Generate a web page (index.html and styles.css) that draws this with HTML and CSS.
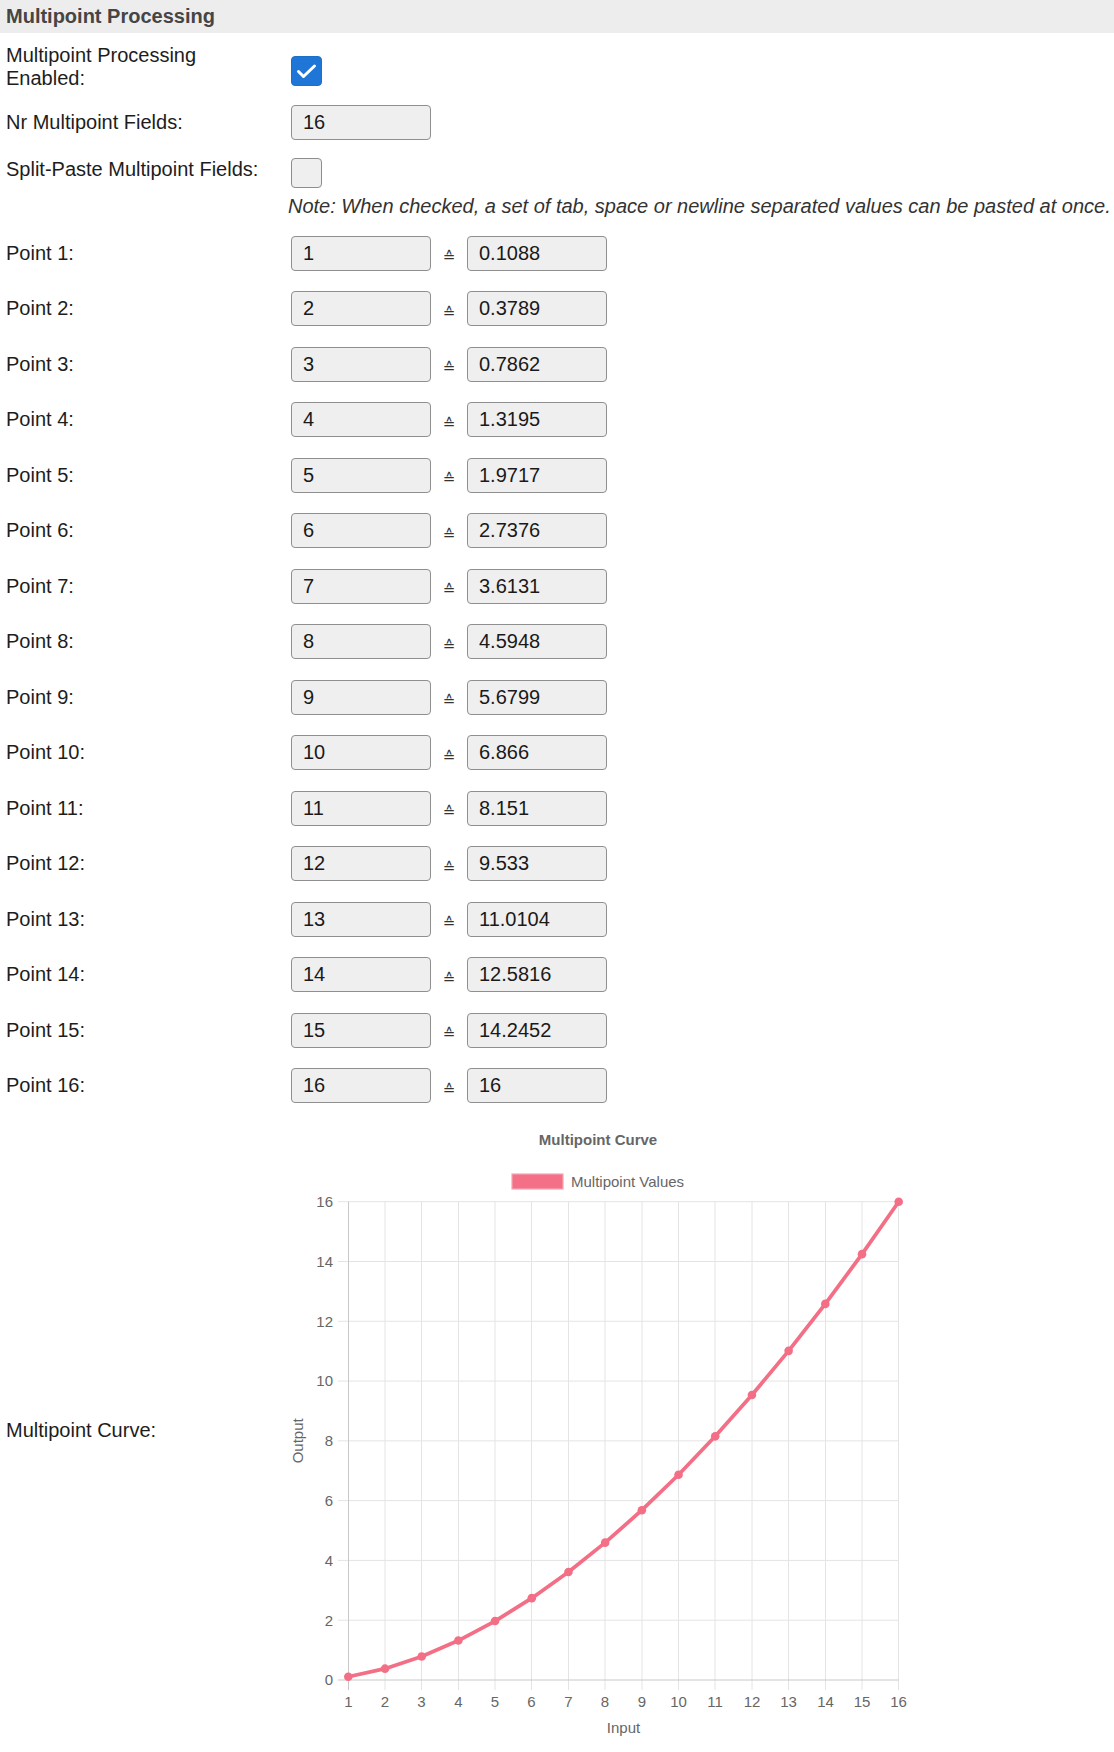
FILE: index.html
```html
<!DOCTYPE html>
<html>
<head>
<meta charset="utf-8">
<title>Multipoint Processing</title>
<link rel="stylesheet" href="styles.css">
</head>
<body>
<div class="section-title">Multipoint Processing</div>
<div class="form">
  <div class="row row-enabled">
    <div class="label">Multipoint Processing Enabled:</div>
    <div class="field"><span class="cb checked"><svg width="31" height="30" viewBox="0 0 31 30"><polyline points="7.5,15.5 12.5,20.5 23.5,10" fill="none" stroke="#fff" stroke-width="3" stroke-linecap="round" stroke-linejoin="round"/></svg></span></div>
  </div>
  <div class="row row-count">
    <div class="label">Nr Multipoint Fields:</div>
    <div class="field"><input class="txt" type="text" value="16"></div>
  </div>
  <div class="row row-split">
    <div class="label">Split-Paste Multipoint Fields:</div>
    <div class="field"><span class="cb"></span></div>
  </div>
  <div class="row row-note">
    <div></div>
    <div class="note">Note: When checked, a set of tab, space or newline separated values can be pasted at once.</div>
  </div>

  <div class="row point"><div class="label">Point 1:</div><div class="field pair"><input class="txt" type="text" value="1"><span class="eq">≙</span><input class="txt" type="text" value="0.1088"></div></div>
  <div class="row point"><div class="label">Point 2:</div><div class="field pair"><input class="txt" type="text" value="2"><span class="eq">≙</span><input class="txt" type="text" value="0.3789"></div></div>
  <div class="row point"><div class="label">Point 3:</div><div class="field pair"><input class="txt" type="text" value="3"><span class="eq">≙</span><input class="txt" type="text" value="0.7862"></div></div>
  <div class="row point"><div class="label">Point 4:</div><div class="field pair"><input class="txt" type="text" value="4"><span class="eq">≙</span><input class="txt" type="text" value="1.3195"></div></div>
  <div class="row point"><div class="label">Point 5:</div><div class="field pair"><input class="txt" type="text" value="5"><span class="eq">≙</span><input class="txt" type="text" value="1.9717"></div></div>
  <div class="row point"><div class="label">Point 6:</div><div class="field pair"><input class="txt" type="text" value="6"><span class="eq">≙</span><input class="txt" type="text" value="2.7376"></div></div>
  <div class="row point"><div class="label">Point 7:</div><div class="field pair"><input class="txt" type="text" value="7"><span class="eq">≙</span><input class="txt" type="text" value="3.6131"></div></div>
  <div class="row point"><div class="label">Point 8:</div><div class="field pair"><input class="txt" type="text" value="8"><span class="eq">≙</span><input class="txt" type="text" value="4.5948"></div></div>
  <div class="row point"><div class="label">Point 9:</div><div class="field pair"><input class="txt" type="text" value="9"><span class="eq">≙</span><input class="txt" type="text" value="5.6799"></div></div>
  <div class="row point"><div class="label">Point 10:</div><div class="field pair"><input class="txt" type="text" value="10"><span class="eq">≙</span><input class="txt" type="text" value="6.866"></div></div>
  <div class="row point"><div class="label">Point 11:</div><div class="field pair"><input class="txt" type="text" value="11"><span class="eq">≙</span><input class="txt" type="text" value="8.151"></div></div>
  <div class="row point"><div class="label">Point 12:</div><div class="field pair"><input class="txt" type="text" value="12"><span class="eq">≙</span><input class="txt" type="text" value="9.533"></div></div>
  <div class="row point"><div class="label">Point 13:</div><div class="field pair"><input class="txt" type="text" value="13"><span class="eq">≙</span><input class="txt" type="text" value="11.0104"></div></div>
  <div class="row point"><div class="label">Point 14:</div><div class="field pair"><input class="txt" type="text" value="14"><span class="eq">≙</span><input class="txt" type="text" value="12.5816"></div></div>
  <div class="row point"><div class="label">Point 15:</div><div class="field pair"><input class="txt" type="text" value="15"><span class="eq">≙</span><input class="txt" type="text" value="14.2452"></div></div>
  <div class="row point"><div class="label">Point 16:</div><div class="field pair"><input class="txt" type="text" value="16"><span class="eq">≙</span><input class="txt" type="text" value="16"></div></div>

  <div class="row row-chart">
    <div class="label">Multipoint Curve:</div>
    <div class="field chart-field">
      <svg class="chart" width="620" height="620" viewBox="0 0 620 620">
        <text class="chart-title" x="308" y="25.3" text-anchor="middle">Multipoint Curve</text>
        <rect class="legend-box" x="222" y="54" width="51" height="15"/>
        <text class="tick" x="281" y="66.8">Multipoint Values</text>

        <g class="grid">
          <line x1="48" y1="500.21" x2="608.7" y2="500.21"/>
          <line x1="48" y1="440.42" x2="608.7" y2="440.42"/>
          <line x1="48" y1="380.64" x2="608.7" y2="380.64"/>
          <line x1="48" y1="320.85" x2="608.7" y2="320.85"/>
          <line x1="48" y1="261.06" x2="608.7" y2="261.06"/>
          <line x1="48" y1="201.28" x2="608.7" y2="201.28"/>
          <line x1="48" y1="141.49" x2="608.7" y2="141.49"/>
          <line x1="48" y1="81.7" x2="608.7" y2="81.7"/>
          <line x1="95" y1="81.7" x2="95" y2="570"/>
          <line x1="131.5" y1="81.7" x2="131.5" y2="570"/>
          <line x1="168.5" y1="81.7" x2="168.5" y2="570"/>
          <line x1="205" y1="81.7" x2="205" y2="570"/>
          <line x1="241.5" y1="81.7" x2="241.5" y2="570"/>
          <line x1="278.5" y1="81.7" x2="278.5" y2="570"/>
          <line x1="315" y1="81.7" x2="315" y2="570"/>
          <line x1="352" y1="81.7" x2="352" y2="570"/>
          <line x1="388.5" y1="81.7" x2="388.5" y2="570"/>
          <line x1="425" y1="81.7" x2="425" y2="570"/>
          <line x1="462" y1="81.7" x2="462" y2="570"/>
          <line x1="498.5" y1="81.7" x2="498.5" y2="570"/>
          <line x1="535.5" y1="81.7" x2="535.5" y2="570"/>
          <line x1="572" y1="81.7" x2="572" y2="570"/>
          <line x1="608.5" y1="81.7" x2="608.5" y2="570"/>
        </g>
        <g class="axis">
          <line x1="58.5" y1="81.7" x2="58.5" y2="570"/>
          <line x1="48" y1="560" x2="608.7" y2="560"/>
        </g>

        <g class="tick" text-anchor="end">
          <text x="43" y="565.3">0</text>
          <text x="43" y="505.5">2</text>
          <text x="43" y="445.7">4</text>
          <text x="43" y="385.9">6</text>
          <text x="43" y="326.2">8</text>
          <text x="43" y="266.4">10</text>
          <text x="43" y="206.6">12</text>
          <text x="43" y="146.8">14</text>
          <text x="43" y="87">16</text>
        </g>
        <g class="tick" text-anchor="middle">
          <text x="58.5" y="587">1</text>
          <text x="95" y="587">2</text>
          <text x="131.5" y="587">3</text>
          <text x="168.5" y="587">4</text>
          <text x="205" y="587">5</text>
          <text x="241.5" y="587">6</text>
          <text x="278.5" y="587">7</text>
          <text x="315" y="587">8</text>
          <text x="352" y="587">9</text>
          <text x="388.5" y="587">10</text>
          <text x="425" y="587">11</text>
          <text x="462" y="587">12</text>
          <text x="498.5" y="587">13</text>
          <text x="535.5" y="587">14</text>
          <text x="572" y="587">15</text>
          <text x="608.5" y="587">16</text>
        </g>
        <text class="tick" x="333.5" y="613.3" text-anchor="middle">Input</text>
        <text class="tick" transform="translate(8 320.8) rotate(-90)" x="0" y="5.3" text-anchor="middle">Output</text>

        <polyline class="series" points="58.3,556.75 94.99,548.67 131.69,536.5 168.38,520.56 205.07,501.06 241.77,478.16 278.46,451.99 315.15,422.64 351.84,390.21 388.54,354.75 425.23,316.33 461.92,275.02 498.62,230.86 535.31,183.89 572,134.16 608.7,81.7"/>
        <g class="dots">
          <circle cx="58.3" cy="556.75" r="4.3"/>
          <circle cx="94.99" cy="548.67" r="4.3"/>
          <circle cx="131.69" cy="536.5" r="4.3"/>
          <circle cx="168.38" cy="520.56" r="4.3"/>
          <circle cx="205.07" cy="501.06" r="4.3"/>
          <circle cx="241.77" cy="478.16" r="4.3"/>
          <circle cx="278.46" cy="451.99" r="4.3"/>
          <circle cx="315.15" cy="422.64" r="4.3"/>
          <circle cx="351.84" cy="390.21" r="4.3"/>
          <circle cx="388.54" cy="354.75" r="4.3"/>
          <circle cx="425.23" cy="316.33" r="4.3"/>
          <circle cx="461.92" cy="275.02" r="4.3"/>
          <circle cx="498.62" cy="230.86" r="4.3"/>
          <circle cx="535.31" cy="183.89" r="4.3"/>
          <circle cx="572" cy="134.16" r="4.3"/>
          <circle cx="608.7" cy="81.7" r="4.3"/>
        </g>
      </svg>
    </div>
  </div>
</div>
</body>
</html>
```

FILE: styles.css
```css
html, body {
  margin: 0;
  padding: 0;
  background: #fff;
}
body {
  width: 1114px;
  font-family: "Liberation Sans", Arial, sans-serif;
  font-size: 20px;
  line-height: 23px;
  color: #1d1d1d;
}
.section-title {
  height: 33px;
  box-sizing: border-box;
  padding: 5px 6px;
  background: #ededed;
  font-weight: bold;
  color: #454545;
}
.form {
  display: flex;
  flex-direction: column;
}
.row {
  display: grid;
  grid-template-columns: 291px 1fr;
  align-items: center;
}
.label {
  padding: 0 20px 0 6px;
}
.field {
  display: flex;
  align-items: center;
}
.row-enabled { height: 67px; }
.row-count { height: 45px; }
.row-split { height: 48px; }
.row-note {
  height: 32.25px;
  align-items: start;
  padding-top: 1.5px;
  box-sizing: border-box;
}
.point { height: 55.5px; }
.row-chart {
  padding-top: 6.75px;
}
.cb {
  display: block;
  width: 31px;
  height: 30px;
  box-sizing: border-box;
  margin-top: 8px;
  border: 1px solid #8d8d8d;
  border-radius: 4px;
  background: #efefef;
}
.cb.checked {
  background: #1f76d6;
  border-color: #1f6fc9;
}
.cb svg {
  display: block;
  margin: -1px;
}
.txt {
  display: block;
  width: 140px;
  height: 35px;
  box-sizing: border-box;
  margin: 0;
  padding: 0 11px;
  border: 1px solid #8f8f8f;
  border-radius: 4px;
  background: #efefef;
  font-family: "Liberation Sans", Arial, sans-serif;
  font-size: 20px;
  color: #1a1a1a;
  outline: none;
}
.eq {
  width: 36px;
  text-align: center;
  font-family: "DejaVu Sans", sans-serif;
  font-size: 15px;
  color: #333;
  padding-top: 9px;
}
.note {
  margin-left: -3px;
  font-style: italic;
  color: #333;
  white-space: nowrap;
}
.chart-field {
  margin-left: -1px;
}
.chart {
  display: block;
  font-family: "Liberation Sans", Arial, sans-serif;
}
.chart-title {
  font-size: 15px;
  font-weight: bold;
  fill: #666;
}
.tick {
  font-size: 15px;
  fill: #666;
}
.legend-box {
  fill: #f37087;
  stroke: #f8a3b2;
  stroke-width: 1.2;
}
.grid line {
  stroke: #e4e4e4;
  stroke-width: 1;
}
.axis line {
  stroke: #c8c8c8;
  stroke-width: 1;
}
.series {
  fill: none;
  stroke: #f36f86;
  stroke-width: 3.75;
  stroke-linejoin: round;
}
.dots circle {
  fill: #f36f86;
}
```
